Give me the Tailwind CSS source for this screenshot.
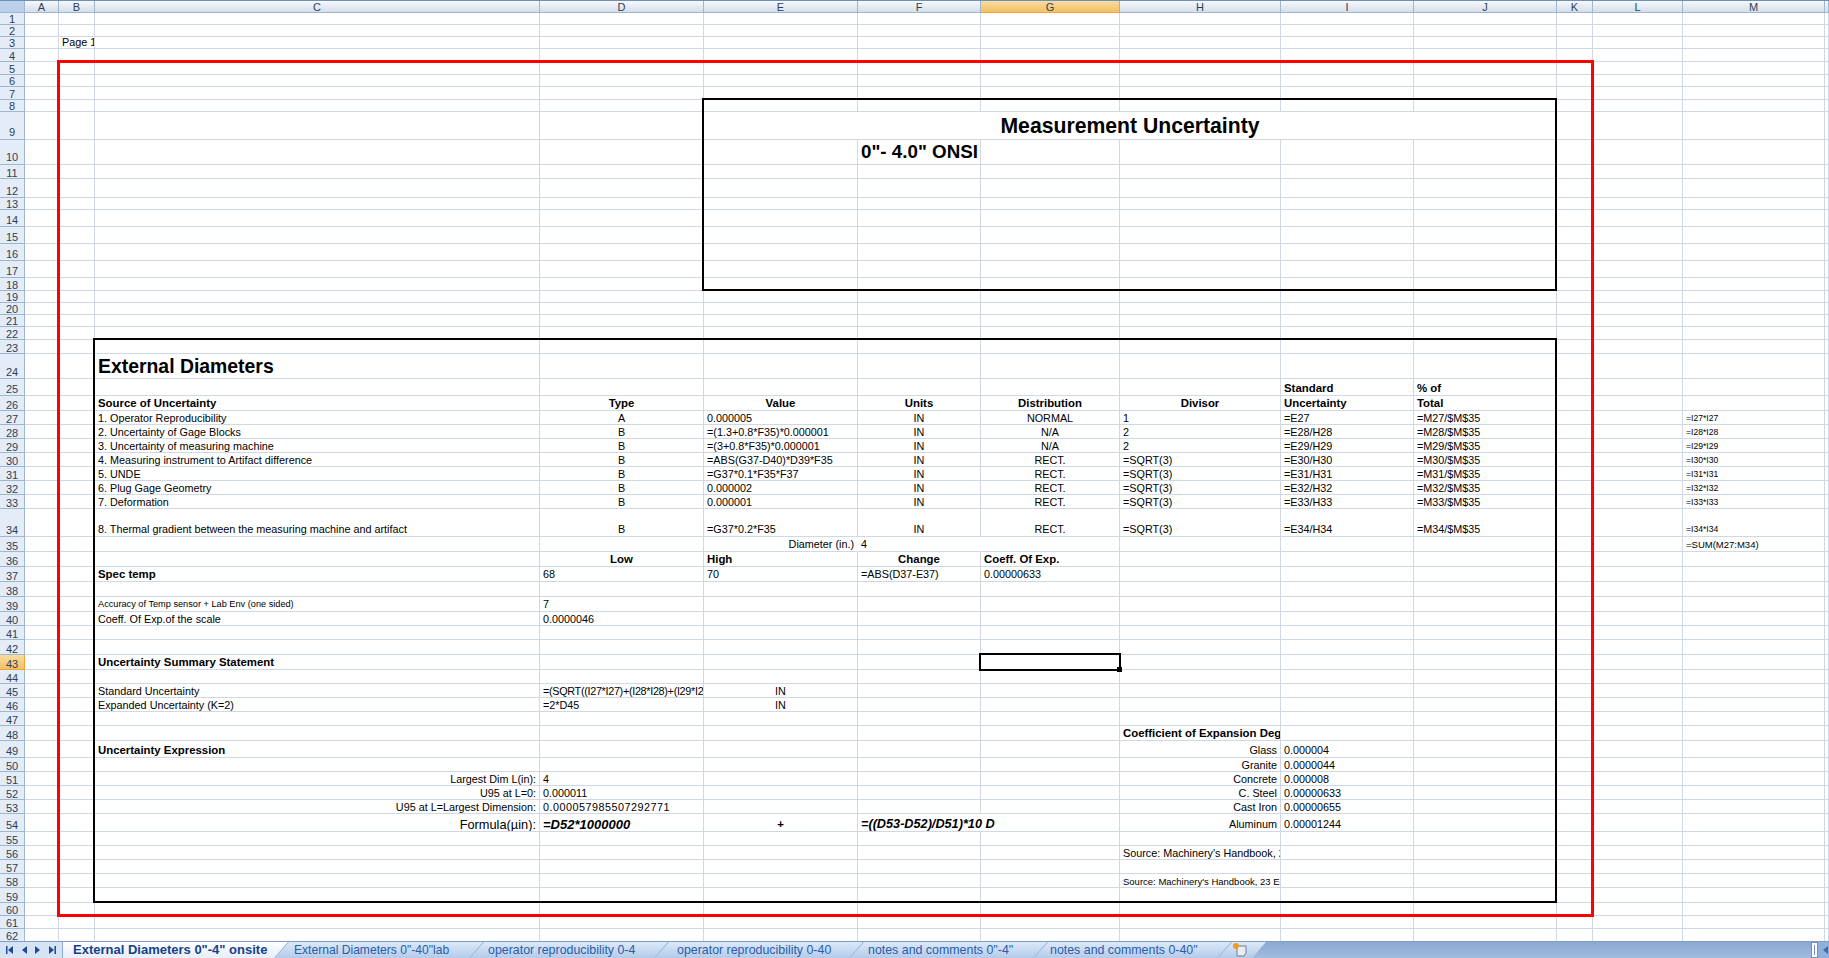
<!DOCTYPE html>
<html lang="en">
<head>
  <meta charset="UTF-8" />
  <title>External Diameters</title>
  <script src="https://cdn.jsdelivr.net/npm/@tailwindcss/browser@4"></script>
</head>
<body class="bg-white text-black overflow-hidden font-['Liberation_Sans',Arial,sans-serif]">

<div class="relative w-[1829px] h-[958px] overflow-hidden">
  <!-- top edge of the ribbon -->
  <div class="h-px bg-[#6b8fb8]"></div>

  <!-- column letters -->
  <div id="cols" class="flex h-3 text-[11px] leading-3 text-[#2f3f55]"></div>

  <!-- row numbers + cells -->
  <div id="sheet" class="h-[928px] overflow-hidden"></div>

  <!-- drawn boxes on top of the sheet -->
  <div class="absolute left-[57px] top-[60px] w-[1537px] h-[857px] border-[3px] border-[#ff0000]"></div>
  <div class="absolute left-[702px] top-[98px] w-[855px] h-[193px] border-2 border-black"></div>
  <div class="absolute left-[93px] top-[338px] w-[1464px] h-[565px] border-2 border-black"></div>
  <!-- active cell G43 -->
  <div class="absolute left-[979px] top-[653px] w-[142px] h-[18px] border-2 border-black">
    <div class="absolute -right-[3px] -bottom-[3px] w-[5px] h-[5px] bg-black"></div>
  </div>

  <!-- sheet tabs -->
  <div class="absolute left-0 bottom-0 w-full h-[17px] flex bg-gradient-to-b from-[#8aa8d2] to-[#a3bcdf] border-t border-[#7f9dc7]">
    <div class="w-[63px] h-full flex items-center justify-between px-[6px] bg-[#d5e3f5] border-r border-[#8eabd3] text-[#1f4a94]">
      <svg class="w-[7px] h-[8px]" viewBox="0 0 7 8" fill="currentColor"><path d="M0 0h1.500v8H0zM7 0v8L2 4z"/></svg>
      <svg class="w-[5px] h-[8px]" viewBox="0 0 5 8" fill="currentColor"><path d="M5 0v8L0 4z"/></svg>
      <svg class="w-[5px] h-[8px]" viewBox="0 0 5 8" fill="currentColor"><path d="M0 0v8l5-4z"/></svg>
      <svg class="w-[7px] h-[8px]" viewBox="0 0 7 8" fill="currentColor"><path d="M0 0v8l5-4zM5.500 0H7v8H5.500z"/></svg>
    </div>
    <div class="h-full flex text-[12.400px] leading-[16px] whitespace-nowrap text-[#2a5da8]">
      <div class="w-[225px] -mr-[13px] pl-[10px] bg-gradient-to-b from-white to-[#e6eef9] font-bold text-[13px] text-[#15428b] [clip-path:polygon(0_0,100%_0,calc(100%-14px)_100%,0_100%)]">External Diameters 0"-4" onsite</div>
      <div class="w-[208px] -mr-[13px] pl-[19px] text-[12.100px] bg-gradient-to-b from-[#dce9f9] to-[#b4cbea] [clip-path:polygon(14px_0,100%_0,calc(100%-14px)_100%,0_100%)]">External Diameters 0"-40"lab</div>
      <div class="w-[198px] -mr-[13px] pl-[18px] bg-gradient-to-b from-[#dce9f9] to-[#b4cbea] [clip-path:polygon(14px_0,100%_0,calc(100%-14px)_100%,0_100%)]">operator reproducibility 0-4</div>
      <div class="w-[208px] -mr-[13px] pl-[22px] bg-gradient-to-b from-[#dce9f9] to-[#b4cbea] [clip-path:polygon(14px_0,100%_0,calc(100%-14px)_100%,0_100%)]">operator reproducibility 0-40</div>
      <div class="w-[197px] -mr-[13px] pl-[18px] bg-gradient-to-b from-[#dce9f9] to-[#b4cbea] [clip-path:polygon(14px_0,100%_0,calc(100%-14px)_100%,0_100%)]">notes and comments 0"-4"</div>
      <div class="w-[197px] -mr-[13px] pl-[16px] bg-gradient-to-b from-[#dce9f9] to-[#b4cbea] [clip-path:polygon(14px_0,100%_0,calc(100%-14px)_100%,0_100%)]">notes and comments 0-40"</div>
      <div class="w-[48px] relative bg-gradient-to-b from-[#dce9f9] to-[#b4cbea] [clip-path:polygon(14px_0,100%_0,calc(100%-14px)_100%,0_100%)]">
        <svg class="absolute left-[13px] top-0 w-[18px] h-[15px]" viewBox="0 0 18 15">
          <path d="M6 4h9v7l-2 3H6z" fill="#e8edf4" stroke="#6d7f96"/>
          <circle cx="5" cy="4" r="3" fill="#f09a23"/>
        </svg>
      </div>
    </div>
    <!-- start of the horizontal scrollbar -->
    <div class="absolute right-0 top-0 w-[18px] h-full flex">
      <div class="w-[7px] h-full bg-white border border-[#6f8fbd] flex justify-center py-[2px]"><div class="w-px h-full bg-[#6f8fbd]"></div></div>
      <div class="flex-1 h-full bg-[#8fb0dc] flex items-center justify-end pr-px">
        <svg class="w-[5px] h-[8px] text-[#3f6aa8]" viewBox="0 0 5 8" fill="currentColor"><path d="M5 0v8L0 4z"/></svg>
      </div>
    </div>
  </div>
</div>

<script>
  // sheet geometry, read off the screenshot
  const colWidths = { A: 34, B: 36, C: 445, D: 164, E: 154, F: 123, G: 139, H: 161, I: 133, J: 143, K: 36, L: 90, M: 142, N: 4 };
  const rowHeights = [12,12,12,13,13,12,13,12,28,25,14,19,12,17,17,17,17,13,12,12,12,13,14,25,17,15,14,14,14,14,14,14,14,28,15,15,15,15,15,14,14,15,15,14,14,14,14,15,17,14,14,14,14,18,14,14,14,14,15,13,13,13];

  const bold = 'font-bold text-[11.400px]';
  const center = 'text-center';
  const right = 'text-right';
  const small = 'text-[8.600px]';

  // row -> column -> [text, classes, merged columns]
  const cells = {
    3: { B: ['Page 1 of 1'] },
    9: { E: ['Measurement Uncertainty', 'font-bold text-[21.200px] text-center', 'EFGHIJ'] },
    10: { F: ['0"- 4.0" ONSI', 'font-bold text-[18.800px]'] },
    24: { C: ['External Diameters', 'font-bold text-[19.400px]'] },
    25: { I: ['Standard', bold], J: ['% of', bold] },
    26: { C: ['Source of Uncertainty', bold], D: ['Type', bold + ' ' + center], E: ['Value', bold + ' ' + center], F: ['Units', bold + ' ' + center], G: ['Distribution', bold + ' ' + center], H: ['Divisor', bold + ' ' + center], I: ['Uncertainty', bold], J: ['Total', bold] },
    27: { C: ['1. Operator Reproducibility'], D: ['A', center], E: ['0.000005'], F: ['IN', center], G: ['NORMAL', center], H: ['1'], I: ['=E27'], J: ['=M27/$M$35'], M: ['=I27*I27', small] },
    28: { C: ['2. Uncertainty of Gage Blocks'], D: ['B', center], E: ['=(1.3+0.8*F35)*0.000001'], F: ['IN', center], G: ['N/A', center], H: ['2'], I: ['=E28/H28'], J: ['=M28/$M$35'], M: ['=I28*I28', small] },
    29: { C: ['3. Uncertainty of measuring machine'], D: ['B', center], E: ['=(3+0.8*F35)*0.000001'], F: ['IN', center], G: ['N/A', center], H: ['2'], I: ['=E29/H29'], J: ['=M29/$M$35'], M: ['=I29*I29', small] },
    30: { C: ['4. Measuring instrument to Artifact difference'], D: ['B', center], E: ['=ABS(G37-D40)*D39*F35'], F: ['IN', center], G: ['RECT.', center], H: ['=SQRT(3)'], I: ['=E30/H30'], J: ['=M30/$M$35'], M: ['=I30*I30', small] },
    31: { C: ['5. UNDE'], D: ['B', center], E: ['=G37*0.1*F35*F37'], F: ['IN', center], G: ['RECT.', center], H: ['=SQRT(3)'], I: ['=E31/H31'], J: ['=M31/$M$35'], M: ['=I31*I31', small] },
    32: { C: ['6. Plug Gage Geometry'], D: ['B', center], E: ['0.000002'], F: ['IN', center], G: ['RECT.', center], H: ['=SQRT(3)'], I: ['=E32/H32'], J: ['=M32/$M$35'], M: ['=I32*I32', small] },
    33: { C: ['7. Deformation'], D: ['B', center], E: ['0.000001'], F: ['IN', center], G: ['RECT.', center], H: ['=SQRT(3)'], I: ['=E33/H33'], J: ['=M33/$M$35'], M: ['=I33*I33', small] },
    34: { C: ['8. Thermal gradient between the measuring machine and artifact'], D: ['B', center], E: ['=G37*0.2*F35'], F: ['IN', center], G: ['RECT.', center], H: ['=SQRT(3)'], I: ['=E34/H34'], J: ['=M34/$M$35'], M: ['=I34*I34', small] },
    35: { E: ['Diameter (in.)', right], F: ['4'], M: ['=SUM(M27:M34)', 'text-[9.500px]'] },
    36: { D: ['Low', bold + ' ' + center], E: ['High', bold], F: ['Change', bold + ' ' + center], G: ['Coeff. Of Exp.', bold] },
    37: { C: ['Spec temp', bold], D: ['68'], E: ['70'], F: ['=ABS(D37-E37)'], G: ['0.00000633'] },
    39: { C: ['Accuracy of Temp sensor + Lab Env (one sided)', 'text-[9.200px]'], D: ['7'] },
    40: { C: ['Coeff. Of Exp.of the scale'], D: ['0.0000046'] },
    43: { C: ['Uncertainty Summary Statement', bold] },
    45: { C: ['Standard Uncertainty'], D: ['=(SQRT((I27*I27)+(I28*I28)+(I29*I2', 'tracking-[-0.3px]'], E: ['IN', center] },
    46: { C: ['Expanded Uncertainty (K=2)'], D: ['=2*D45'], E: ['IN', center] },
    48: { H: ['Coefficient of Expansion Deg', bold] },
    49: { C: ['Uncertainty Expression', bold], H: ['Glass', right], I: ['0.000004'] },
    50: { H: ['Granite', right], I: ['0.0000044'] },
    51: { C: ['Largest Dim L(in):', right], D: ['4'], H: ['Concrete', right], I: ['0.000008'] },
    52: { C: ['U95 at L=0:', right], D: ['0.000011'], H: ['C. Steel', right], I: ['0.00000633'] },
    53: { C: ['U95 at L=Largest Dimension:', right], D: ['0.000057985507292771', 'tracking-[0.5px]'], H: ['Cast Iron', right], I: ['0.00000655'] },
    54: { C: ['Formula(µin):', 'text-[12.800px] text-right'], D: ['=D52*1000000', 'font-bold italic text-[13px]'], E: ['+', bold + ' ' + center], F: ['=((D53-D52)/D51)*10 D', 'font-bold italic text-[12.700px]', 'FG'], H: ['Aluminum', right], I: ['0.00001244'] },
    56: { H: ['Source: Machinery\'s Handbook, 2'] },
    58: { H: ['Source: Machinery\'s Handbook, 23 Ed', 'text-[9.500px]'] }
  };

  const noRightLine = ['35E', '35F'];

  const letters = Object.keys(colWidths);
  const headCell = 'shrink-0 text-center border-r border-b border-[#9eb6ce] bg-gradient-to-b from-[#f7f9fc] to-[#d5deeb]';
  const headActive = 'shrink-0 text-center border-r border-b border-[#f2a33c] bg-gradient-to-b from-[#f9dca0] to-[#f2c164]';

  document.getElementById('cols').innerHTML =
    '<div class="w-[25px] shrink-0 border-r border-b border-[#9eb6ce] bg-[#bcd0ec]"></div>' +
    letters.map(l => `<div class="${l === 'G' ? headActive : headCell}" style="width:${colWidths[l]}px">${l === 'N' ? '' : l}</div>`).join('');

  let html = '';
  rowHeights.forEach((h, i) => {
    const r = i + 1;
    const row = cells[r] || {};
    const numCls = r === 43
      ? 'bg-gradient-to-b from-[#f9dca0] to-[#f2c164] border-[#f2a33c]'
      : 'bg-[#e4ecf7] border-[#9eb6ce]';
    const numOffset = (r === 9 || r === 10) ? 'mb-px' : (h >= 17 ? '' : '-mb-px');
    let line = `<div class="w-[25px] shrink-0 flex items-end justify-center border-r border-b ${numCls}"><span class="text-[11px] leading-3 text-[#2f3f55] ${numOffset}">${r}</span></div>`;
    const tall = r === 9 || r === 10 || r === 24;
    // rows of 14px and less sit a pixel lower than the others in the screenshot
    const nudge = (h > 14) ? '' : '-mb-px';
    for (let c = 0; c < letters.length; c++) {
      const l = letters[c];
      const cell = row[l];
      let w = colWidths[l];
      // a few cells span several columns, their inner gridlines disappear
      if (cell && cell[2]) {
        w = cell[2].split('').reduce((s, k) => s + colWidths[k], 0);
        c += cell[2].length - 1;
      }
      const text = cell ? cell[0] : '';
      const extra = cell && cell[1] ? cell[1] : '';
      const base = /text-\[/.test(extra) ? '' : 'text-[10.800px]';
      const align = tall ? 'items-center' : 'items-end';
      const lineCls = noRightLine.includes(r + l) ? 'border-r-transparent' : '';
      const leading = tall ? 'leading-[24px]' : 'leading-[13px]';
      line += `<div class="shrink-0 flex ${align} border-r border-b border-[#d0d7e5] ${lineCls}" style="width:${w}px"><div class="w-full px-[3px] whitespace-nowrap overflow-hidden ${leading} ${nudge} ${base} ${extra}">${text}</div></div>`;
    }
    html += `<div class="flex" style="height:${h}px">${line}</div>`;
  });
  document.getElementById('sheet').innerHTML = html;
</script>
</body>
</html>
